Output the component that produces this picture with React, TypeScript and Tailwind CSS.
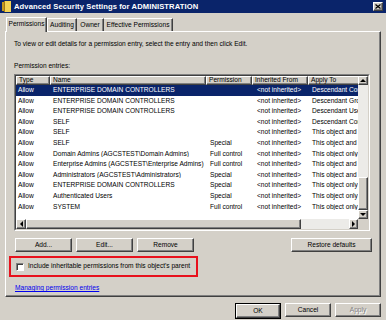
import React from "react";

const rows: [string, string, string, string, string][] = [
  ["Allow", "ENTERPRISE DOMAIN CONTROLLERS", "", "<not inherited>", "Descendant Computer objects"],
  ["Allow", "ENTERPRISE DOMAIN CONTROLLERS", "", "<not inherited>", "Descendant Group objects"],
  ["Allow", "ENTERPRISE DOMAIN CONTROLLERS", "", "<not inherited>", "Descendant User objects"],
  ["Allow", "SELF", "", "<not inherited>", "Descendant Computer objects"],
  ["Allow", "SELF", "", "<not inherited>", "This object and all descendant objects"],
  ["Allow", "SELF", "Special", "<not inherited>", "This object and all descendant objects"],
  ["Allow", "Domain Admins (AGCSTEST\\Domain Admins)", "Full control", "<not inherited>", "This object only"],
  ["Allow", "Enterprise Admins (AGCSTEST\\Enterprise Admins)", "Full control", "<not inherited>", "This object and all descendant objects"],
  ["Allow", "Administrators (AGCSTEST\\Administrators)", "Special", "<not inherited>", "This object and all descendant objects"],
  ["Allow", "ENTERPRISE DOMAIN CONTROLLERS", "Special", "<not inherited>", "This object only"],
  ["Allow", "Authenticated Users", "Special", "<not inherited>", "This object only"],
  ["Allow", "SYSTEM", "Full control", "<not inherited>", "This object only"],
];

const raised =
  "border border-t-white border-l-white border-r-[#404040] border-b-[#404040] shadow-[inset_-1px_-1px_#808080] bg-[#d4d0c8]";

function Btn({ label, className = "", disabled = false }: { label: string; className?: string; disabled?: boolean }) {
  return (
    <div className={`${raised} h-[14px] flex items-center justify-center ${className}`}>
      <span className={disabled ? "text-[#808080] [text-shadow:1px_1px_#ffffff]" : "text-black"}>{label}</span>
    </div>
  );
}

function Arrow({ dir }: { dir: "up" | "down" | "left" | "right" }) {
  const pts =
    dir === "up" ? "1,4 4,1 7,4" : dir === "down" ? "1,1 4,4 7,1" : dir === "left" ? "4,1 1,4 4,7" : "1,1 4,4 1,7";
  const w = dir === "up" || dir === "down" ? 8 : 5;
  const h = dir === "up" || dir === "down" ? 5 : 8;
  return (
    <svg width={w} height={h} viewBox={`0 0 ${w} ${h}`}>
      <polygon points={pts} fill="#000" />
    </svg>
  );
}

const cols = ["w-[34px]", "w-[156px]", "w-[46px]", "w-[56px]", "w-[52px]"];

export default function App() {
  return (
    <div className="w-[386px] h-[320px] bg-[#d4d0c8] overflow-hidden font-['Liberation_Sans',Arial,sans-serif] text-[6.6px] leading-none text-black flex flex-col">
      {/* Title bar */}
      <div className="h-[13px] bg-[#0a246a] flex items-center pl-[2px] pr-[3px] shrink-0">
        <svg width="9" height="11" viewBox="0 0 9 11" className="shrink-0">
          <rect x="0" y="1" width="3" height="9" fill="#c89a1c" />
          <rect x="2" y="0" width="7" height="11" fill="#f4d454" />
          <rect x="2" y="0" width="1" height="11" fill="#a07818" />
        </svg>
        <span className="ml-[3px] text-white font-bold text-[7.6px] tracking-[0.1px]">
          Advanced Security Settings for ADMINISTRATION
        </span>
        <div className="flex-1" />
        <div className={`${raised} w-[10px] h-[9px] flex items-center justify-center`}>
          <svg width="6" height="5" viewBox="0 0 6 5">
            <path d="M0.5 0.5 L5.5 4.5 M5.5 0.5 L0.5 4.5" stroke="#000" strokeWidth="1.2" />
          </svg>
        </div>
      </div>

      {/* Tabs */}
      <div className="pl-[5px] pr-[5px] pt-[3px] flex flex-col">
        <div className="flex items-end h-[15px] relative z-10">
          <div className="h-[15px] w-[41px] ml-[1px] border-t border-l border-t-white border-l-white border-r border-r-[#404040] shadow-[inset_-1px_0_#808080] bg-[#d4d0c8] flex items-center justify-center -mb-[1px] pb-[1px]">
            Permissions
          </div>
          <div className="h-[13px] w-[30px] border-t border-l border-t-white border-l-white border-r border-r-[#404040] shadow-[inset_-1px_0_#808080] flex items-center justify-center">
            Auditing
          </div>
          <div className="h-[13px] w-[27px] border-t border-t-white border-r border-r-[#404040] shadow-[inset_-1px_0_#808080] flex items-center justify-center">
            Owner
          </div>
          <div className="h-[13px] w-[69px] border-t border-t-white border-r border-r-[#404040] shadow-[inset_-1px_0_#808080] flex items-center justify-center">
            Effective Permissions
          </div>
        </div>

        {/* Panel */}
        <div className="h-[266px] border border-t-white border-l-white border-r-[#404040] border-b-[#404040] shadow-[inset_-1px_-1px_#808080] flex flex-col pl-[8px] pr-[10px]">
          <div className="mt-[9px] h-[7px] flex items-center">
            To view or edit details for a permission entry, select the entry and then click Edit.
          </div>
          <div className="mt-[15px] h-[7px] flex items-center">Permission entries:</div>

          {/* List view */}
          <div className="mt-[4px] h-[157px] border border-t-[#808080] border-l-[#808080] border-r-white border-b-white">
            <div className="h-full border border-t-[#404040] border-l-[#404040] border-r-[#d4d0c8] border-b-[#d4d0c8] bg-white flex flex-col">
              <div className="flex flex-1 min-h-0">
                <div className="flex-1 flex flex-col overflow-hidden">
                  {/* Header */}
                  <div className="flex h-[9px] shrink-0">
                    {["Type", "Name", "Permission", "Inherited From", "Apply To"].map((h, i) => (
                      <div
                        key={h}
                        className={`${cols[i]} shrink-0 ${raised} flex items-center pl-[2px] overflow-hidden whitespace-nowrap`}
                      >
                        {h}
                      </div>
                    ))}
                  </div>
                  {rows.map((r, ri) => (
                    <div
                      key={ri}
                      className={`flex h-[10.6px] shrink-0 items-center ${ri === 0 ? "bg-[#0a246a] text-white" : ""}`}
                    >
                      {r.map((c, ci) => (
                        <div
                          key={ci}
                          className={`${cols[ci]} shrink-0 overflow-hidden whitespace-nowrap ${
                            ci === 0 ? "pl-[2px]" : ci === 1 ? "pl-[3px]" : ci === 2 ? "pl-[4px]" : ci === 3 ? "pl-[5px]" : "pl-[4px]"
                          }`}
                        >
                          {c}
                        </div>
                      ))}
                    </div>
                  ))}
                </div>
                {/* Vertical scrollbar */}
                <div className="w-[10px] shrink-0 flex flex-col bg-[#ecebe8]">
                  <div className={`${raised} h-[9px] flex items-center justify-center`}>
                    <Arrow dir="up" />
                  </div>
                  <div className="flex-1" />
                  <div className={`${raised} h-[33px]`} />
                  <div className={`${raised} h-[9px] flex items-center justify-center`}>
                    <Arrow dir="down" />
                  </div>
                </div>
              </div>
              {/* Horizontal scrollbar */}
              <div className="h-[10px] shrink-0 flex bg-[#ecebe8]">
                <div className={`${raised} w-[10px] flex items-center justify-center`}>
                  <Arrow dir="left" />
                </div>
                <div className={`${raised} w-[275px]`} />
                <div className="flex-1" />
                <div className={`${raised} w-[9px] flex items-center justify-center`}>
                  <Arrow dir="right" />
                </div>
                <div className="w-[10px] bg-[#d4d0c8]" />
              </div>
            </div>
          </div>

          {/* Buttons row */}
          <div className="mt-[7px] flex">
            <Btn label="Add..." className="w-[57px] ml-[1px]" />
            <Btn label="Edit..." className="w-[57px] ml-[4px]" />
            <Btn label="Remove" className="w-[57px] ml-[4px]" />
            <div className="flex-1" />
            <Btn label="Restore defaults" className="w-[81px] mr-[-2px]" />
          </div>

          {/* Red box with checkbox */}
          <div className="mt-[4px] -ml-[5px] w-[189px] h-[21px] border-2 border-[#e8101c] flex items-center pl-[5px]">
            <div className="w-[8px] h-[8px] bg-white border border-t-[#808080] border-l-[#808080] border-r-white border-b-white shadow-[inset_1px_1px_#404040]" />
            <span className="ml-[4px]">Include inheritable permissions from this object's parent</span>
          </div>

          <div className="mt-[8px] ml-[1px] text-[#0000ee] underline">Managing permission entries</div>
        </div>

        {/* Bottom buttons */}
        <div className="mt-[6px] flex justify-end pr-0">
          <div className="border border-black">
            <Btn label="OK" className="w-[44px] h-[12px]" />
          </div>
          <Btn label="Cancel" className="w-[46px] ml-[4px]" />
          <Btn label="Apply" className="w-[46px] ml-[4px]" disabled />
        </div>
      </div>
    </div>
  );
}
